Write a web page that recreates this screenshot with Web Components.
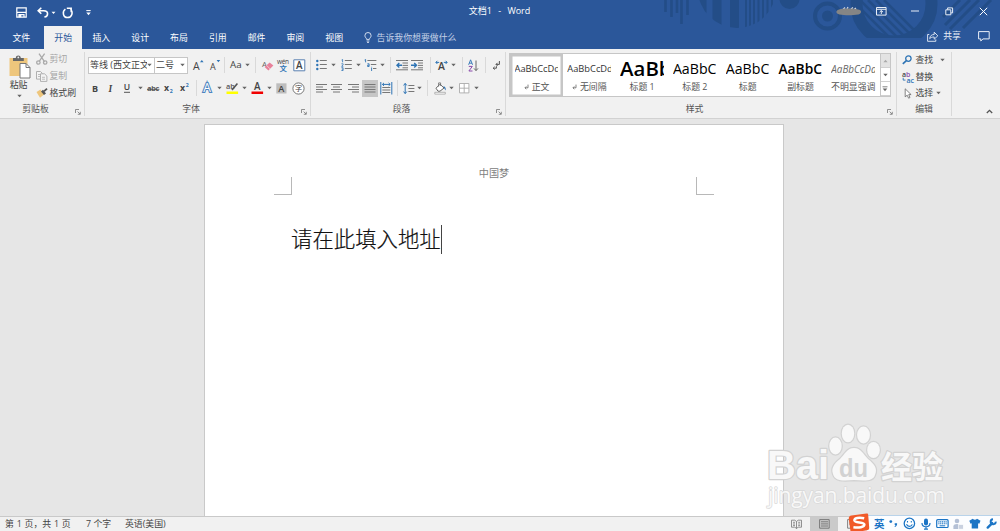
<!DOCTYPE html>
<html lang="zh-CN">
<head>
<meta charset="utf-8">
<title>文档1 - Word</title>
<style>
    html, body {
        margin: 0;
        width: 1000px;
        height: 531px;
        overflow: hidden;
    }
    body {
        font-family: "Open Sans", "Noto Sans CJK SC", sans-serif;
        font-size: 8.9px;
        line-height: 14px;
        color: #444;
    }
</style>
</head>
<body>
<word-app></word-app>

<script>
// ----------------------------------------------------------------------------
// MARK: Icons
// ----------------------------------------------------------------------------

const lines = (rows, x = 0) => rows.map(([y, w, dx = 0]) => `<path d="M${x + dx} ${y}h${w}" stroke="#777" stroke-width="1"/>`).join('')

// name: [width, height, markup]
const ICONS = {
    caret: [5, 4, '<path d="M.3.7h4.4L2.5 3.2z" fill="#666"/>'],
    rule: [1, 16, '<path d="M.5 0v16" stroke="#d9d9d9"/>'],
    save: [11, 11, '<path d="M.8.8h9.400v9.400H.8z" fill="none" stroke="#fff" stroke-width="1.2"/><path d="M1 5.4h9M3 10V7.6h5V10" fill="none" stroke="#fff" stroke-width="1.2"/><path d="M3 8h2.3v2.3H3z" fill="#fff"/>'],
    undo: [12, 11, '<path d="M4.3.8 1.2 3.8l3.1 3M1.5 3.8h5.3c5 0 4.8 5.7.6 6.2" fill="none" stroke="#fff" stroke-width="1.6"/>'],
    redo: [12, 12, '<path d="M3.400 2.2C-.1 4.500 1 10.6 5.500 10.6c4.6 0 6-5.500 2.900-8.3M4.800 1.200h4.400v4" fill="none" stroke="#fff" stroke-width="1.5"/>'],
    qat: [5, 6, '<path d="M.3.6h4.4" stroke="#fff" stroke-width="1"/><path d="M.3 2.6h4.4L2.5 5.2z" fill="#fff"/>'],
    caretWhite: [5, 4, '<path d="M.5.8h4L2.5 3z" fill="#fff"/>'],
    ribbonOptions: [11, 9, '<path d="M.5.5h9.6v7.6H.5zM.5 2.3h9.6M5.3 7V3.6M3.6 5.1l1.7-1.6L7 5.1" fill="none" stroke="#e8eef7"/>'],
    minimize: [8, 2, '<path d="M0 1h8" stroke="#e8eef7"/>'],
    restore: [9, 9, '<path d="M.8 2.8h5v5h-5zM2.6 2.6V.9h5v5H6" fill="none" stroke="#e8eef7"/>'],
    close: [9, 9, '<path d="m.8.8 7.4 7.4M8.2.8.8 8.2" stroke="#fff"/>'],
    bulb: [8, 11, '<path d="M2.6 7.4C2.6 6 .9 5.5.9 3.6a3.1 3.1 0 0 1 6.2 0c0 1.9-1.7 2.4-1.7 3.8zM2.6 9h2.8M3 10.4h2" fill="none" stroke="#e3eaf5" stroke-width=".9"/>'],
    share: [12, 11, '<path d="M2.3 3.5H.6v6.8h8.2V8.4M2.7 7.7c.3-3 2-4.2 4.5-4.2V1.2l3.6 3.6-3.6 3.4V6c-2 0-3.4.4-4.5 1.7z" fill="none" stroke="#e8eef7" stroke-width=".9"/>'],
    comment: [12, 11, '<path d="M.6.6h10.6v7.3H5L2.8 10V7.9H.6z" fill="none" stroke="#e8eef7"/>'],
    user: [26, 9, '<path d="M7 2.500 9 .5M11 2 12 0M15 2l2-1.500M18 2.500 20 1" stroke="#d5dbe6" stroke-width="1.200"/><path d="M3 2.500c5-1.500 16-.8 19 0 4 .6 4 3.500.5 5-6 1-14 1-19 0C-.5 6.500-.5 3.500 3 2.500z" fill="#858585"/>'],

    paste: [22, 24, '<path d="M.5 3h18v18H.5z" fill="#eec67c"/><path d="M4 3h2.8c.2-3.2 4.7-3.2 5 0h3v3H4z" fill="#666"/><circle cx="9.3" cy="2.4" r=".9" fill="#eee"/><path d="M11 8.5h6l4 4V23H11z" fill="#fff" stroke="#777"/><path d="M17 8.5v4h4" fill="none" stroke="#777"/>'],
    cut: [12, 12, '<g fill="none" stroke="#aaa" stroke-width="1.3"><path d="m3 .7 5.5 8M8.6.7 3 8.7"/><circle cx="2.4" cy="9.5" r="1.7"/><circle cx="9.2" cy="9.5" r="1.7"/></g>'],
    copy: [12, 11, '<g fill="#f4f4f4" stroke="#b0b0b0"><path d="M.5.5h4l1.8 1.8v5.8H.5z"/><path d="M4.5 2.8h4l2.4 2.3v5.3H4.5z"/></g><path d="M2 3.5h2M2 5.5h2M6 6.3h3M6 8.2h3" stroke="#b0b0b0" stroke-width=".8"/>'],
    painter: [12, 10, '<path d="m.5 4 4-2.4 3.6 5L4 9.8z" fill="#eec67c"/><path d="m5 3.4 2-1.7 3 3.8-2 1.4z" fill="#555"/><path d="m8 3.4 3-2.7" stroke="#555" stroke-width="1.8"/>'],
    launcher: [6, 6, '<path d="M.5 4V.5H4M2.6 2.6 5 5M5.3 2.8v2.5H2.8" fill="none" stroke="#777" stroke-width=".8"/>'],

    grow: [11, 12, '<text x="0" y="10.5" font-size="10.500" fill="#444">A</text><path d="M7 3.2 8.8 1l1.8 2.2z" fill="#2e74b5"/>'],
    shrink: [11, 12, '<text x="0" y="10.5" font-size="9" fill="#444">A</text><path d="M6.6 1h3.6L8.4 3.2z" fill="#2e74b5"/>'],
    changeCase: [13, 12, '<text x="0" y="9.3" font-size="9.8" fill="#444">Aa</text>'],
    clear: [12, 12, '<text x="0" y="7.5" font-size="8" fill="#666">A</text><path d="m2.600 8 5-4.600L11.400 6.600l-5 4.800z" fill="#e8819a"/><path d="m4.4 6.2 3.8 3.8" stroke="#f7d3db" stroke-width=".8"/>'],
    pinyin: [13, 13, '<text x="0" y="5" font-size="6.5" fill="#444" textLength="12">wén</text><text x="2.6" y="12.2" font-size="7.4" font-weight="700" fill="#2e74b5">文</text>'],
    charBorder: [13, 13, '<path d="M.8.8h11v11H.8z" fill="#fff" stroke="#5b81b1"/><text x="3" y="9.8" font-size="9.8" font-weight="600" fill="#444">A</text>'],
    bold: [8, 11, '<text x="1" y="8.6" font-size="9" font-weight="700" fill="#444">B</text>'],
    italic: [8, 11, '<text x="1.6" y="8.6" font-size="9.4" font-family="Liberation Serif" font-style="italic" font-weight="700" fill="#444">I</text>'],
    underline: [8, 12, '<text x=".8" y="8.4" font-size="8.6" font-weight="600" fill="#444">U</text><path d="M1 10.3h6" stroke="#444" stroke-width=".9"/>'],
    strike: [13, 11, '<text x=".3" y="8.4" font-size="7.2" font-weight="600" fill="#444" textLength="11.8">abc</text><path d="M0 6.3h12.4" stroke="#444" stroke-width=".8"/>'],
    sub: [10, 12, '<text x="0" y="8.800" font-size="8.8" font-weight="700" fill="#444">x</text><text x="5.8" y="11" font-size="5.2" font-weight="700" fill="#2e74b5">2</text>'],
    sup: [10, 12, '<text x="0" y="8.8" font-size="8.8" font-weight="700" fill="#444">x</text><text x="5.8" y="4.8" font-size="5.2" font-weight="700" fill="#2e74b5">2</text>'],
    effects: [12, 12, '<text x="1.2" y="10.300" font-size="12" font-weight="400" fill="#fff" stroke="#4d84c0" stroke-width="2.200" paint-order="stroke">A</text>'],
    highlight: [13, 13, '<text x="0" y="7" font-size="7.4" font-weight="600" fill="#555">ab</text><path d="m6 8 5.4-6.4" stroke="#555" stroke-width="1.6"/><path d="M.5 9.5h11.6V12H.5z" fill="#ff0"/>'],
    fontColor: [13, 13, '<text x="3" y="7.8" font-size="9.8" font-weight="600" fill="#444">A</text><path d="M.5 9.5h11.6V12H.5z" fill="#f00000"/>'],
    shade: [11, 11, '<path d="M.3.3h10.2v10.2H.3z" fill="#bdbdbd"/><text x="2.3" y="8.8" font-size="9.2" font-weight="600" fill="#444">A</text>'],
    enclose: [13, 13, '<circle cx="6.5" cy="6.5" r="5.6" fill="#fff" stroke="#666" stroke-width=".9"/><text x="2.9" y="9.2" font-size="7.2" fill="#444">字</text>'],

    bullets: [11, 12, `<g fill="#2e74b5"><circle cx="1.3" cy="2" r="1.2"/><circle cx="1.3" cy="6" r="1.2"/><circle cx="1.3" cy="10" r="1.2"/></g>${lines([[1.500, 7], [5.500, 7], [9.500, 7]], 3.8)}`],
    numbering: [11, 12, `<path d="M.6 1 1.600.5v2.800M.4 4.800h1.700v1L.6 7.300h1.700M.4 8.700h1.700v2.800H.4M.8 10.100h1.300" fill="none" stroke="#2e74b5" stroke-width=".8"/>${lines([[1.500, 7], [5.500, 7], [9.500, 7]], 3.8)}`],
    multilevel: [13, 12, `<path d="M.6 1 1.600.5v2.800M3.400 4.800h1.700v2.700H3.600V6.200h1.500M7.600 9v3M7.600 7.800v.7" fill="none" stroke="#2e74b5" stroke-width=".9"/>${lines([[1.5, 9, 3.4], [5.5, 5.5, 6.8], [9.5, 3.4, 9]])}`],
    outdent: [13, 12, `${lines([[1.5, 12], [4, 5.5, 6.5], [6.4, 5.5, 6.5], [8.8, 5.5, 6.5], [10.8, 12]])}<path d="M6 6.2H1.2M3.3 4 1 6.2l2.3 2.2" fill="none" stroke="#2e74b5" stroke-width="1.4"/>`],
    indent: [13, 12, `${lines([[1.5, 12], [4, 5, 7], [6.4, 5, 7], [8.8, 5, 7], [10.8, 12]])}<path d="M0 6.2h5M3.2 4l2.3 2.2-2.3 2.2" fill="none" stroke="#2e74b5" stroke-width="1.4"/>`],
    asian: [13, 12, '<text x="2.9" y="10.8" font-size="10.4" font-weight="600" fill="#444">A</text><path d="M1 3.4h3.2M2.4 1.8.8 3.4 2.4 5M12 3.4H8.8M10.6 1.8l1.6 1.6L10.6 5" fill="none" stroke="#2e74b5"/>'],
    sort: [11, 13, '<path d="m.6 5.800 2-5 2 5M1.300 4.200h2.700" fill="none" stroke="#2e74b5" stroke-width=".9"/><path d="M.8 7.400h3.500L.9 12h3.600" fill="none" stroke="#8a4bab" stroke-width="1"/><path d="M8 1.5v10M6 9.4l2 2.2 2-2.2" fill="none" stroke="#666"/>'],
    marks: [9, 11, '<path d="M7.4 1v3.4H4M5.6 2.8 4 4.4 5.6 6M4.4 6.2v2H1.2M2.6 6.8 1.2 8.2l1.4 1.4" fill="none" stroke="#555"/>'],
    alignLeft: [12, 11, lines([[1.5, 11], [4, 7], [6.5, 11], [9, 7]])],
    alignCenter: [12, 11, lines([[1.5, 11], [4, 7, 2], [6.5, 11], [9, 7, 2]])],
    alignRight: [12, 11, lines([[1.5, 11], [4, 7, 4], [6.5, 11], [9, 7, 4]])],
    justify: [16, 17, `<path d="M0 0h16v17H0z" fill="#c6c6c6"/>${lines([[4.5, 11], [7, 11], [9.5, 11], [12, 11]], 2.5)}`],
    distribute: [13, 13, `<path d="M.8 0v12.5M11.8 0v12.5M2.5 2.4h7.6M4 .9 2.4 2.4 4 3.9M8.6.9l1.6 1.5-1.6 1.5" fill="none" stroke="#2e74b5"/>${lines([[5.5, 8], [8, 8], [10.5, 8]], 2.3)}`],
    spacing: [12, 13, `<path d="M2.2 1.5v10M.6 3.4l1.6-2 1.6 2M.6 9.6l1.6 2 1.6-2" fill="none" stroke="#2e74b5"/>${lines([[3.5, 6], [6.5, 6], [9.5, 6]], 5.4)}`],
    bucket: [13, 13, '<path d="m2 6.2 4-4 4 3.8-4 3.2H4z" fill="#fff" stroke="#666"/><path d="M4.6 4.6V.9h2v3" fill="none" stroke="#666" stroke-width=".8"/><path d="M9.4 4c2.2.6 2.6 2.4 2.2 4.4C10.6 7.4 10 6 9.4 4z" fill="#2e74b5"/><path d="M.8 10.3h10.5v1.8H.8z" fill="#fff" stroke="#999" stroke-width=".7"/>'],
    borders: [11, 11, '<path d="M.5.5h9.4v9.4H.5zM5.2.5v9.4M.5 5.2h9.4" fill="#fff" stroke="#aaa" stroke-width=".9"/>'],

    returnMark: [5, 6, '<path d="M4 .6v3.200H1M2.300 2.400.9 3.800l1.400 1.300" fill="none" stroke="#666" stroke-width=".8"/>'],
    up: [5, 4, '<path d="M.4 3.3h4.2L2.5.8z" fill="#aaa"/>'],
    more: [6, 6, '<path d="M.5.8h5" stroke="#666" stroke-width=".8"/><path d="M.7 2.6h4.6L3 5.2z" fill="#666"/>'],
    find: [11, 10, '<circle cx="6.4" cy="3.6" r="2.7" fill="none" stroke="#2e74b5" stroke-width="1.3"/><path d="M4.4 5.6.8 8.8" stroke="#2e74b5" stroke-width="1.7"/>'],
    replace: [12, 12, '<text x="0" y="5.8" font-size="7" font-weight="600"><tspan fill="#444">a</tspan><tspan fill="#8a4bab">b</tspan></text><text x="4.4" y="11.6" font-size="7" font-weight="600" fill="#2e74b5">ac</text><path d="M1.2 6.8v2.3h2.3" fill="none" stroke="#2e74b5" stroke-width=".9"/>'],
    select: [8, 11, '<path d="M1.2.8v8l2-1.6 1.4 3 1.4-.7-1.3-2.9h2.4z" fill="#fff" stroke="#666" stroke-width=".8"/>'],
    collapse: [7, 5, '<path d="M.8 4 3.5 1.3 6.2 4" fill="none" stroke="#555" stroke-width="1.3"/>'],

    read: [11, 10, '<path d="M.5 1.2h3.3L5.5 2.5l1.7-1.3h3.3v7H7.2L5.5 9.5 3.8 8.2H.5zM5.5 2.5v7M2 3.3h2M2 5h2M2 6.6h2M7.2 3.3h2M7.2 5h2M7.2 6.6h2" fill="none" stroke="#777" stroke-width=".8"/>'],
    print: [11, 10, '<path d="M.6.6h9.6v8.6H.6zM2 2.8h7M2 4.9h7M2 7h7" fill="none" stroke="#707070" stroke-width=".9"/>'],
    web: [9, 10, '<path d="M.6.6h8v8.6h-8zM2 3h5M2 5h5" fill="none" stroke="#777" stroke-width=".9"/>'],
    sogou: [22, 20, '<path d="M3.5 2.6 18.4.5c1.2-.1 1.8.3 1.8 1.4l1 12.7c0 1.8-.5 2.3-2.2 2.7L5.4 19.5c-2 .3-2.8-.2-3-2L.8 6c-.2-2 .6-3 2.7-3.4z" fill="#f15a29"/><path d="M16.2 5.2C10.7 4 6.3 5 6.4 7.4c.2 2.8 10 1.3 10 4.2 0 2.6-5.8 3.4-11 2.6" fill="none" stroke="#fff" stroke-width="2.5"/>'],
    punct: [9, 9, '<circle cx="1.8" cy="2.6" r="1.4" fill="#1b74c5"/><path d="M5.7 4.3h2.4c.2 1.9-.6 3-2.2 3.8l-.4-.7c.8-.5 1-1 .9-1.4h-.7z" fill="#1b74c5"/>'],
    smile: [13, 13, '<circle cx="6.4" cy="6.4" r="5.2" fill="#fff" stroke="#1b74c5" stroke-width="1.3"/><path d="M4.5 4v1.5M8.3 4v1.5M3.5 7.3c1 2.8 4.9 2.8 5.8 0" fill="none" stroke="#1b74c5" stroke-width="1.1"/>'],
    mic: [10, 12, '<rect x="3" y=".5" width="4" height="7" rx="2" fill="#1b74c5"/><path d="M1 5c0 5 8 5 8 0M5 8.8v2.4M3 11.2h4" fill="none" stroke="#1b74c5" stroke-width="1.2"/>'],
    keyboard: [13, 10, '<rect x=".7" y=".7" width="11.4" height="7.8" rx="1" fill="#fff" stroke="#1b74c5" stroke-width="1.2"/><path d="M2.3 2.9h8.4M2.3 4.8h8.4" stroke="#1b74c5" stroke-width="1.1" stroke-dasharray="1.2 .6"/><path d="M3.6 6.8h5.6" stroke="#1b74c5"/>'],
    person: [11, 12, '<circle cx="4" cy="3" r="2.3" fill="#b4c0d6"/><path d="M.4 11V8.4C.4 5.5 7 5 7.6 8.4V11z" fill="#b4c0d6"/><rect x="5.7" y="6.4" width="4.7" height="4.8" fill="#c9d1e0" stroke="#fff" stroke-width=".7"/>'],
    shirt: [12, 11, '<path d="m3.8.7-3.5 2 1.2 3 1.2-.5v5.3h6.4V5.2l1.2.5 1.2-3-3.5-2C7 2.1 4.8 2.1 3.8.7z" fill="#1b74c5"/>'],
    wrench: [11, 11, '<path d="m1.7 9.6 4.5-4.5" stroke="#1b74c5" stroke-width="2.4" stroke-linecap="round"/><path d="M9.7 3.6A2.5 2.5 0 1 1 7 1.2" fill="none" stroke="#1b74c5" stroke-width="2"/>'],
}

class UiIcon extends HTMLElement {
    connectedCallback() {
        const [w, h, markup] = ICONS[this.getAttribute('name')]
        this.attachShadow({ mode: 'open' }).innerHTML = `
            <style>
                :host { display: inline-flex; flex: none; }
                svg { display: block; overflow: visible; }
            </style>
            <svg width="${w}" height="${h}" viewBox="0 0 ${w} ${h}">${markup}</svg>
        `
    }
}
customElements.define('ui-icon', UiIcon)

// ----------------------------------------------------------------------------
// MARK: Helpers
// ----------------------------------------------------------------------------

/**
 * Registers an element whose shadow root holds fixed markup
 * @param {string} name
 * @param {string} html
 */
const define = (name, html) => {
    const template = document.createElement('template')
    template.innerHTML = html
    customElements.define(name, class extends HTMLElement {
        constructor() {
            super()
            this.attachShadow({ mode: 'open' }).appendChild(template.content.cloneNode(true))
        }
    })
}

// "grow:18 shrink:16" -> a row of centered cells with those widths
class ToolRow extends HTMLElement {
    connectedCallback() {
        const cells = this.getAttribute('tools').split(' ').map((tool) => {
            const [name, width] = tool.split(':')
            return `<span style="width:${width}px"><ui-icon name="${name}"></ui-icon></span>`
        })
        this.attachShadow({ mode: 'open' }).innerHTML = `
            <style>
                :host { display: flex; height: 16px; align-items: center; }
                span { display: flex; flex: none; align-items: center; justify-content: center; height: 16px; }
            </style>
            <slot></slot>${cells.join('')}
        `
    }
}
customElements.define('tool-row', ToolRow)

// ----------------------------------------------------------------------------
// MARK: Title bar
// ----------------------------------------------------------------------------

define('title-art', `
    <style>
        :host { position: absolute; top: 0; right: 0; width: 360px; height: 49px; }
        svg { display: block; }
    </style>
    <svg width="360" height="49" viewBox="0 0 360 49">
        <defs>
            <clipPath id="disc"><circle cx="97" cy="-11" r="39"/></clipPath>
            <clipPath id="cut"><path d="M200 0h110v38H200z"/></clipPath>
            <clipPath id="ring"><circle cx="254" cy="4" r="32"/></clipPath>
        </defs>
        <g stroke="#234d87" fill="none">
            <path d="M25.5 0v12M31.5 0v17M37 0v13M41.5 0v24M47.5 0v15" stroke-width="2.6"/>
            <g clip-path="url(#disc)">
                <path d="M62 0v30M77 0v30M94.5 0v30" stroke-width="9"/>
                <path d="M106 0v30M110 0v30M114 0v30M118.5 0v30M123 0v30M127.5 0v30M132 0v30" stroke-width="2"/>
            </g>
            <circle cx="187.5" cy="16" r="12.5" stroke-width="4"/>
            <circle cx="254" cy="4" r="37.5" stroke-width="12" clip-path="url(#cut)"/>
            <path d="m214 2 38 38M220 0l38 38M228 0l38 38M236 0l38 38M244 0l36 36" stroke-width="2.6" clip-path="url(#ring)"/>
            <path d="m303 17 17-17M305 25 330 0M310 29 339 0M323 28 351 0" stroke-width="3"/>
        </g>
        <g fill="#234d87"><circle cx="149.5" cy="-1" r="10"/><circle cx="187.5" cy="16" r="5.5"/></g>
    </svg>
`)

define('title-bar', `
    <style>
        :host { display: grid; grid-template-columns: 1fr auto 1fr; height: 25px; align-items: center; color: #fff; }
        div { display: flex; align-items: center; height: 25px; position: relative; }
        .quick { padding-left: 16px; }
        .window { justify-content: flex-end; padding-right: 12px; }
        .title { word-spacing: 4px; font-size: 9px; padding: 0 1px 3px 0; height: 22px; }
    </style>
    <div class="quick">
        <ui-icon name="save"></ui-icon>
        <ui-icon name="undo" style="margin-left:10px"></ui-icon>
        <ui-icon name="caretWhite" style="margin-left:2px"></ui-icon>
        <ui-icon name="redo" style="margin-left:6px"></ui-icon>
        <ui-icon name="qat" style="margin-left:12px"></ui-icon>
    </div>
    <div class="title">文档1 - Word</div>
    <div class="window" style="padding-bottom:3px;height:22px">
        <ui-icon name="user" style="margin-right:14px"></ui-icon>
        <ui-icon name="ribbonOptions"></ui-icon>
        <ui-icon name="minimize" style="margin-left:24px"></ui-icon>
        <ui-icon name="restore" style="margin-left:26px"></ui-icon>
        <ui-icon name="close" style="margin-left:25px"></ui-icon>
    </div>
`)

// ----------------------------------------------------------------------------
// MARK: Tabs
// ----------------------------------------------------------------------------

define('ribbon-tab', `
    <style>
        :host { display: flex; width: 38.8px; height: 23px; align-items: center; justify-content: center; color: #fff; }
        :host([selected]) { width: 37.5px; background: #f1f1f1; color: #2b579a; }
    </style>
    <slot></slot>
`)

define('ribbon-tabs', `
    <style>
        :host { display: flex; height: 24px; align-items: flex-end; position: relative; color: #e8eef7; }
        .file { width: 42.6px; margin-right: 1.9px; }
        .tell { display: flex; align-items: center; gap: 5px; height: 23px; margin-left: 10px; color: #c3d0e6; }
        .share { display: flex; align-items: center; gap: 4.5px; height: 26px; margin-left: auto; margin-right: 10.5px; }
    </style>
    <ribbon-tab class="file">文件</ribbon-tab>
    <ribbon-tab selected>开始</ribbon-tab>
    <ribbon-tab>插入</ribbon-tab>
    <ribbon-tab>设计</ribbon-tab>
    <ribbon-tab>布局</ribbon-tab>
    <ribbon-tab>引用</ribbon-tab>
    <ribbon-tab>邮件</ribbon-tab>
    <ribbon-tab>审阅</ribbon-tab>
    <ribbon-tab>视图</ribbon-tab>
    <span class="tell"><ui-icon name="bulb"></ui-icon>告诉我你想要做什么</span>
    <span class="share"><ui-icon name="share"></ui-icon>共享<ui-icon name="comment" style="margin-left:12px"></ui-icon></span>
`)

// ----------------------------------------------------------------------------
// MARK: Ribbon
// ----------------------------------------------------------------------------

define('ribbon-group', `
    <style>
        :host { display: flex; flex: none; flex-direction: column; box-sizing: border-box; height: 64px; margin-top: 3px; border-right: 1px solid #d9d9d9; }
        .body { height: 51px; }
        .foot { display: flex; height: 14px; align-items: center; }
        .label { flex: 1; text-align: center; line-height: 14px; color: #555; }
        ui-icon { margin: 5px 3px 0 4px; }
        :host([plain]) ui-icon { display: none; }
    </style>
    <div class="body"><slot></slot></div>
    <div class="foot"><span class="label"><slot name="label"></slot></span><ui-icon name="launcher"></ui-icon></div>
`)

define('combo-box', `
    <style>
        :host { display: flex; flex: none; box-sizing: border-box; height: 17px; align-items: center; justify-content: space-between; padding: 0 2px 0 1px; border: 1px solid #c6c6c6; background: #fff; font-size: 9px; }
        span { overflow: hidden; white-space: nowrap; }
    </style>
    <span><slot></slot></span><ui-icon name="caret"></ui-icon>
`)

define('clipboard-tools', `
    <style>
        :host { display: flex; padding: 3px 0 0 9px; }
        .paste { display: flex; flex-direction: column; align-items: center; width: 20px; }
        .paste ui-icon:first-child { margin-left: 2px; }
        .paste span { line-height: 12px; margin: 0 0 3px -1px; white-space: nowrap; }
        .side { display: flex; flex-direction: column; margin: -4px 0 0 7px; }
        .side div { display: flex; align-items: center; height: 16.8px; gap: 1.5px; }
        .off { color: #a6a6a6; }
    </style>
    <div class="paste"><ui-icon name="paste"></ui-icon><span>粘贴</span><ui-icon name="caret"></ui-icon></div>
    <div class="side">
        <div class="off"><ui-icon name="cut"></ui-icon>剪切</div>
        <div class="off"><ui-icon name="copy"></ui-icon>复制</div>
        <div><ui-icon name="painter"></ui-icon>格式刷</div>
    </div>
`)

define('font-tools', `
    <style>
        :host { display: flex; flex-direction: column; gap: 7px; padding: 5px 0 0 2px; }
        .family { width: 67px; margin-left: 1px; }
        .size { width: 34px; margin-left: -1px; }
    </style>
    <tool-row tools="grow:20 shrink:14 rule:5 changeCase:18 caret:4 rule:12 clear:14 pinyin:16 charBorder:16">
        <combo-box class="family">等线 (西文正文</combo-box><combo-box class="size">二号</combo-box>
    </tool-row>
    <tool-row tools="bold:16 italic:16 underline:16 caret:10 strike:16 sub:16 sup:16 rule:7 effects:15 caret:8 highlight:18 caret:7 fontColor:18 caret:6 shade:19 enclose:15"></tool-row>
`)

define('paragraph-tools', `
    <style>
        :host { display: flex; flex-direction: column; gap: 7px; padding: 5px 0 0 4px; }
    </style>
    <tool-row tools="bullets:13 caret:11 numbering:14 caret:10 multilevel:15 caret:8 rule:9 outdent:14 indent:17 rule:9 asian:13 caret:10 rule:9 sort:13 rule:11 marks:10"></tool-row>
    <tool-row tools="alignLeft:13 alignCenter:18 alignRight:15 justify:17 distribute:16 rule:7 spacing:15 caret:7 rule:9 bucket:16 caret:7 borders:19 caret:5"></tool-row>
`)

// Preview text of a named paragraph style
class StyleCard extends HTMLElement {
    connectedCallback() {
        this.attachShadow({ mode: 'open' }).innerHTML = `
            <style>
                :host { display: flex; flex: none; flex-direction: column; box-sizing: border-box; width: 52.8px; height: 43px; padding: 3px 0 0 4.5px; }
                :host([selected]) { box-shadow: inset 0 0 0 2.5px #c6c6c6; }
                .sample { width: 43.5px; height: 23px; overflow: hidden; white-space: nowrap; line-height: 24px; color: #333; font-size: 9.3px; }
                .name { display: flex; align-items: center; justify-content: center; gap: 3px; width: 44px; line-height: 13px; white-space: nowrap; color: #555; }
            </style>
            <span class="sample" style="${this.getAttribute('look') ?? ''}">${this.getAttribute('sample')}</span>
            <span class="name"><slot></slot></span>
        `
    }
}
customElements.define('style-card', StyleCard)

define('style-gallery', `
    <style>
        :host { display: flex; box-sizing: border-box; width: 382px; height: 44px; margin: 1px 0 0 3px; border: 1px solid #c6c6c6; background: #fff; overflow: hidden; }
        .scroll { display: flex; flex-direction: column; width: 11px; margin-left: auto; border-left: 1px solid #c6c6c6; }
        .scroll span { display: flex; flex: 1; align-items: center; justify-content: center; border-bottom: 1px solid #d0d0d0; }
        .scroll .end { background: #e3e3e3; }
    </style>
    <style-card selected sample="AaBbCcDd"><ui-icon name="returnMark"></ui-icon>正文</style-card>
    <style-card sample="AaBbCcDd"><ui-icon name="returnMark"></ui-icon>无间隔</style-card>
    <style-card sample="AaBb" look="font-size:20.4px;font-weight:600;color:#000;line-height:22px">标题 1</style-card>
    <style-card sample="AaBbC" look="font-size:14.2px;color:#000">标题 2</style-card>
    <style-card sample="AaBbC" look="font-size:14.2px;color:#000">标题</style-card>
    <style-card sample="AaBbC" look="font-size:13.8px;font-weight:600;color:#000">副标题</style-card>
    <style-card sample="AaBbCcDd" look="font-style:italic;color:#666;font-size:9.9px">不明显强调</style-card>
    <div class="scroll">
        <span class="end"><ui-icon name="up"></ui-icon></span>
        <span><ui-icon name="caret"></ui-icon></span>
        <span><ui-icon name="more"></ui-icon></span>
    </div>
`)

define('editing-tools', `
    <style>
        :host { display: block; padding-left: 5px; }
        div { display: flex; align-items: center; height: 16.6px; }
        b { font-weight: normal; width: 13.5px; display: flex; }
    </style>
    <div><b><ui-icon name="find"></ui-icon></b>查找<ui-icon name="caret" style="margin-left:7px"></ui-icon></div>
    <div><b><ui-icon name="replace"></ui-icon></b>替换</div>
    <div><b><ui-icon name="select" style="margin-left:2px"></ui-icon></b>选择<ui-icon name="caret" style="margin-left:3px"></ui-icon></div>
`)

define('word-ribbon', `
    <style>
        :host { display: flex; box-sizing: border-box; height: 70px; background: #f1f1f1; border-bottom: 1px solid #d2d2d2; }
        .collapse { align-self: flex-end; margin: 0 7px 4px auto; }
    </style>
    <ribbon-group style="width:85px"><clipboard-tools></clipboard-tools><span slot="label">剪贴板</span></ribbon-group>
    <ribbon-group style="width:226px"><font-tools></font-tools><span slot="label">字体</span></ribbon-group>
    <ribbon-group style="width:195px"><paragraph-tools></paragraph-tools><span slot="label">段落</span></ribbon-group>
    <ribbon-group style="width:391px"><style-gallery></style-gallery><span slot="label">样式</span></ribbon-group>
    <ribbon-group style="width:55px" plain><editing-tools></editing-tools><span slot="label">编辑</span></ribbon-group>
    <ui-icon class="collapse" name="collapse"></ui-icon>
`)

// ----------------------------------------------------------------------------
// MARK: Document
// ----------------------------------------------------------------------------

define('word-page', `
    <style>
        :host { display: block; box-sizing: border-box; width: 580px; height: 392px; border: 1px solid #c9c9c9; border-bottom: 0; background: #fff; }
        .header { display: flex; justify-content: space-between; height: 70px; padding: 0 69px; }
        .corner { box-sizing: border-box; width: 18px; height: 18px; margin-top: 52px; border-bottom: 1px solid #b8b8b8; }
        .left { border-right: 1px solid #b8b8b8; }
        .right { border-left: 1px solid #b8b8b8; }
        .header p { margin: 40px 0 0; font-size: 10.1px; line-height: 16px; color: #808080; }
        .text { display: flex; align-items: center; height: 30px; margin: 29px 0 0 86px; font-size: 21.4px; line-height: 30px; font-weight: 300; color: #111; -webkit-text-stroke: .2px #111; }
        .caret { width: 1px; height: 29px; background: #444; }
    </style>
    <div class="header"><span class="corner left"></span><p>中国梦</p><span class="corner right"></span></div>
    <div class="text">请在此填入地址<span class="caret"></span></div>
`)

define('word-canvas', `
    <style>
        :host { display: flex; justify-content: center; box-sizing: border-box; height: 397px; padding: 5px 12px 0 0; background: #e6e6e6; overflow: hidden; }
    </style>
    <word-page></word-page>
`)

define('site-mark', `
    <style>
        :host { position: absolute; left: 760px; top: 418px; width: 195px; height: 95px; }
        svg { display: block; overflow: visible; }
    </style>
    <svg width="195" height="95" viewBox="0 0 195 95">
        <g fill="#f8f8f8" stroke="#d2d2d2" stroke-width="2.4" paint-order="stroke" stroke-linejoin="round">
            <text x="7" y="61" font-family="Liberation Sans" font-weight="700" font-size="40" textLength="62" lengthAdjust="spacingAndGlyphs">Bai</text>
            <ellipse cx="75.5" cy="28" rx="6.2" ry="8.5"/>
            <ellipse cx="88" cy="15.5" rx="6.2" ry="8.8"/>
            <ellipse cx="103.5" cy="17" rx="6.4" ry="8.5"/>
            <ellipse cx="113.5" cy="32" rx="6.3" ry="8"/>
            <path d="M94 30c-7 0-9 6-14 11-6 5-9 9-7 15 2 7 9 7 21 6 12 1 19 1 21-5 3-7-1-11-7-16-5-5-7-11-14-11z"/>
            <text x="121" y="59.5" font-family="Noto Sans CJK SC" font-weight="700" font-size="31">经验</text>
            <text x="8" y="84.5" font-family="Open Sans" font-size="21" stroke="#d9d9d9" stroke-width="1.4" textLength="177">jingyan.baidu.com</text>
        </g>
        <text x="79" y="59" font-family="Liberation Sans" font-weight="700" font-size="25" fill="#d2d2d2" textLength="29" lengthAdjust="spacingAndGlyphs">du</text>
    </svg>
`)

// ----------------------------------------------------------------------------
// MARK: Status bar
// ----------------------------------------------------------------------------

define('input-bar', `
    <style>
        :host { position: absolute; right: 0; bottom: 0; display: flex; width: 152px; height: 18px; align-items: flex-end; color: #1b74c5; }
        .panel { display: flex; flex: 1; box-sizing: border-box; height: 16px; align-items: center; justify-content: space-between; margin-left: -3px; padding: 0 3px 0 7px; background: #fcfdff; border-top: 1px solid #b9d3ea; font-size: 10.5px; font-weight: 700; }
        .logo { z-index: 1; margin-bottom: -2px; }
    </style>
    <ui-icon class="logo" name="sogou"></ui-icon>
    <div class="panel">
        英
        <ui-icon name="punct"></ui-icon>
        <ui-icon name="smile"></ui-icon>
        <ui-icon name="mic"></ui-icon>
        <ui-icon name="keyboard"></ui-icon>
        <ui-icon name="person"></ui-icon>
        <ui-icon name="shirt"></ui-icon>
        <ui-icon name="wrench"></ui-icon>
    </div>
`)

define('status-bar', `
    <style>
        :host { display: flex; box-sizing: border-box; height: 15px; align-items: center; padding-left: 5px; background: #f1f1f1; border-top: 1px solid #c9c9c9; line-height: 14px; }
        span { white-space: nowrap; }
        .pages { width: 81px; word-spacing: .5px; }
        .words { width: 39px; }
        .views { display: flex; align-items: center; height: 14px; margin-left: auto; margin-right: 144px; }
        .views span { display: flex; align-items: center; justify-content: center; width: 28px; height: 14px; }
        .views .on { background: #cacaca; }
    </style>
    <span class="pages">第 1 页，共 1 页</span>
    <span class="words">7 个字</span>
    <span>英语(美国)</span>
    <div class="views">
        <span><ui-icon name="read"></ui-icon></span>
        <span class="on"><ui-icon name="print"></ui-icon></span>
        <span style="width:18px;justify-content:flex-end"><ui-icon name="web"></ui-icon></span>
    </div>
`)

// ----------------------------------------------------------------------------
// MARK: App
// ----------------------------------------------------------------------------

define('word-app', `
    <style>
        :host { display: block; position: relative; width: 1000px; height: 531px; overflow: hidden; background: #2b579a; }
    </style>
    <title-art></title-art>
    <title-bar></title-bar>
    <ribbon-tabs></ribbon-tabs>
    <word-ribbon></word-ribbon>
    <word-canvas></word-canvas>
    <status-bar></status-bar>
    <site-mark></site-mark>
    <input-bar></input-bar>
`)
</script>
</body>
</html>
